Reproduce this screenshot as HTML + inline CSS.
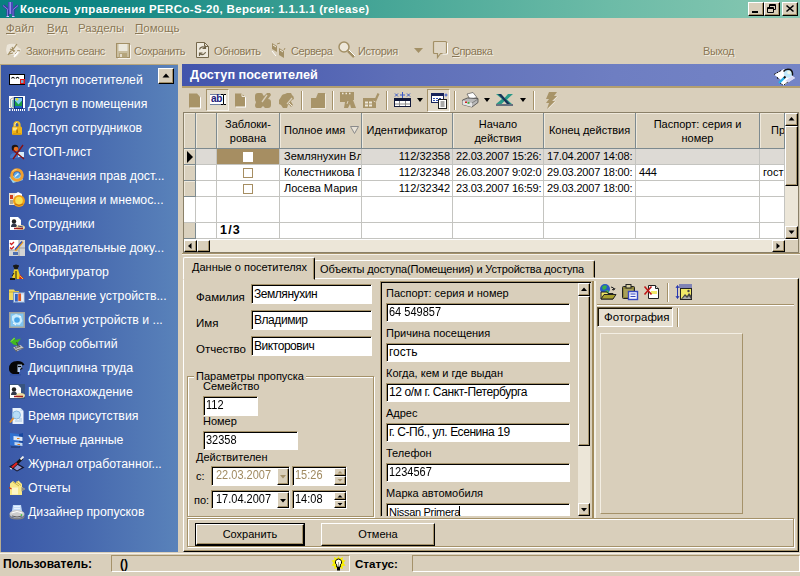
<!DOCTYPE html>
<html><head><meta charset="utf-8">
<style>
*{box-sizing:border-box;margin:0;padding:0}
html,body{width:800px;height:576px;overflow:hidden;background:#d9cfbb;font-family:"Liberation Sans",sans-serif;font-size:11px;color:#000}
.a{position:absolute}
.t{position:absolute;white-space:nowrap;line-height:14px}
#title{left:0;top:0;width:800px;height:18px;background:linear-gradient(90deg,#088080 0%,#0e8583 12%,#2e978d 30%,#4ca999 52%,#6cbba7 76%,#88c8b2 100%)}
#title .t{left:20px;top:1px;color:#fff;font-weight:bold;font-size:11.5px;letter-spacing:0.33px;line-height:16px}
.cb{position:absolute;top:2px;width:16px;height:14px;background:#d9cfbb;border:1px solid;border-color:#fff #000 #000 #fff;box-shadow:inset -1px -1px 0 #a5926a}
.menu{color:#8a7755;text-shadow:1px 1px 0 #f4efe4;font-size:11.5px;top:21px}
.tb{color:#8a7755;text-shadow:1px 1px 0 #f4efe4;font-size:11px;top:44px;letter-spacing:-0.4px}
#left{left:0;top:65px;width:178px;height:487px;border-left:1px solid #b8ac90;background:linear-gradient(90deg,#3a58a8 0%,#4668ae 45%,#5982ba 100%)}
#left .t{left:27px;color:#fff;font-size:12.3px;line-height:16px}
.ic{position:absolute;left:8px;width:16px;height:16px}
#hdr{left:182px;top:64px;width:618px;height:22px;background:linear-gradient(90deg,#4254ac 0%,#5e6fb8 35%,#6e7ec2 70%,#7484c6 100%)}
#hdr .t{left:8px;top:3px;color:#fff;font-weight:bold;font-size:12.7px;line-height:16px}
.inp{position:absolute;background:#fff;border:1px solid;border-color:#a5926a #fff #fff #a5926a;box-shadow:inset 1px 1px 0 #000}
.inp .t{left:3px;top:2px;font-size:12px}
.lbl{font-size:12px}
.hc{position:absolute;top:114px;height:34px;background:#d9cfbb;border:1px solid;border-color:#fff #a5926a #a5926a #fff;font-size:12px;line-height:14px;text-align:center}
.row{position:absolute;left:196px;width:589px;height:16px;background:#fff}
.cell{position:absolute;top:0;height:16px;font-size:12px;line-height:15px;white-space:nowrap;overflow:hidden;border-right:1px solid #c8c4bc;border-bottom:1px solid #c8c4bc}
.btn{position:absolute;background:#d9cfbb;border:1px solid;border-color:#fff #000 #000 #fff;box-shadow:inset -1px -1px 0 #a5926a;font-size:12px;text-align:center}
</style></head><body>
<!-- title -->
<div id="title" class="a"><svg class="a" style="left:2px;top:1px" width="18" height="17"><path d="M0 5l2.500-1.500L8 8.500v3z" fill="#3838a0"/><path d="M17 5l-2.500-1.500L10 8.500v3z" fill="#3838a0"/><path d="M1 4.500l6 5M16 4.500l-6 5" stroke="#8888e0" stroke-width="1"/><rect x="6" y="1" width="5" height="12" fill="#4848b8"/><rect x="7.500" y="1" width="1.500" height="12" fill="#9090e8"/><rect x="4.500" y="9" width="2.500" height="7" fill="#3838a0"/><rect x="10" y="9" width="2.500" height="7" fill="#3838a0"/><rect x="5" y="9" width="1" height="7" fill="#7878d8"/><rect x="10.500" y="9" width="1" height="7" fill="#7878d8"/><path d="M4.500 15.500h2.500M10 15.500h2.500" stroke="#d0d0ff"/></svg><div class="t">Консоль управления PERCo-S-20, Версия: 1.1.1.1 (release)</div>
<div class="cb" style="left:748px"><div class="a" style="left:3px;top:8px;width:6px;height:2px;background:#000"></div></div><div class="cb" style="left:764px"><svg width="14" height="12" style="position:absolute;left:0;top:0"><path d="M4.500 1.500h6v5h-6zM4.500 2.500h6" stroke="#000" fill="none"/><path d="M2.500 4.500h6v5h-6z" fill="#d9cfbb" stroke="#000"/><path d="M2.500 5.500h6" stroke="#000"/></svg></div><div class="cb" style="left:782px"><svg width="14" height="12" style="position:absolute;left:0;top:0"><path d="M3.500 2.500l7 6M10.500 2.500l-7 6" stroke="#000" stroke-width="1.600"/></svg></div>
</div>
<!-- menu -->
<div class="t menu" style="left:6px"><u>Ф</u>айл</div>
<div class="t menu" style="left:47px"><u>В</u>ид</div>
<div class="t menu" style="left:78px">Разделы</div>
<div class="t menu" style="left:135px"><u>П</u>омощь</div>
<!-- toolbar -->
<div class="t tb" style="left:26px">Закончить сеанс</div>
<div class="t tb" style="left:134px">Сохранить</div>
<div class="t tb" style="left:214px">Обновить</div>
<div class="t tb" style="left:291px">Сервера</div>
<div class="t tb" style="left:358px">История</div>
<div class="t tb" style="left:452px"><u>С</u>правка</div>
<div class="t tb" style="left:703px">Выход</div>
<!-- tbicons -->
<svg class="a" style="left:5px;top:42px" width="18" height="17"><path d="M2 3q3-2 8-1l4 4 2 1-1 3-3 4-2 1-1-2-7-1-1-4z" fill="#ece6da"/><path d="M12 2l-3 4-4 4-2 3M5 7l5 2M7 5l2 5M4 12l4-1" stroke="#a39066" stroke-width="1.200" fill="none"/><path d="M12 9q2-1 3 0M10 12l2-2" stroke="#a39066" stroke-width="1" fill="none"/><path d="M9 15l4-5" stroke="#fff" stroke-width="1.500"/></svg>
<svg class="a" style="left:115px;top:43px" width="17" height="16"><rect x="1.500" y=".5" width="13" height="14" fill="#c9bd9e" stroke="#a39066"/><rect x="3.500" y="1" width="9" height="7" fill="#ebe8dc"/><rect x="4" y="10" width="8" height="4.500" fill="#b5a57c"/><rect x="5" y="11" width="2" height="3" fill="#e4dccb"/><path d="M15.500 2v13.500H3" stroke="#f6f2ea" fill="none"/></svg>
<svg class="a" style="left:195px;top:41px" width="16" height="19"><path d="M1.500 1.500h8l4 4v11h-12z" fill="#eee9dd" stroke="#75684c" stroke-width="1"/><path d="M9.500 1.500v4h4" fill="none" stroke="#75684c"/><path d="M4.500 8.500a3.200 3.200 0 0 1 5.500-1.500M10.500 4.500v3h-3M10.500 11a3.200 3.200 0 0 1-5.500 1.500M4.500 15v-3h3" fill="none" stroke="#6e6248" stroke-width="1.200"/></svg>
<svg class="a" style="left:270px;top:41px" width="16" height="18"><path d="M2 2l5 3v6l-5-3z" fill="#a39066"/><path d="M9 7l5 3v7l-5-3z" fill="#a39066"/><path d="M3 4l3 2M10 9l3 2" stroke="#f1ece0"/><path d="M7 3l3-1M14 9l1-2" stroke="#a39066"/><path d="M2 10l4 5" stroke="#fff"/></svg>
<svg class="a" style="left:337px;top:40px" width="19" height="19"><circle cx="7" cy="7" r="5" fill="#eee8da" stroke="#a39066" stroke-width="1.500"/><path d="M11 11l6 6" stroke="#a39066" stroke-width="2.500"/><path d="M12 10l6 6" stroke="#fff" stroke-width="1"/></svg>
<svg class="a" style="left:414px;top:47px" width="10" height="7"><path d="M0 1h9L4.500 6z" fill="#a39066"/></svg>
<svg class="a" style="left:432px;top:40px" width="18" height="20"><path d="M2.500 1.500h11a1 1 0 0 1 1 1v10a1 1 0 0 1-1 1h-5l-3 4v-4h-3a1 1 0 0 1-1-1v-10a1 1 0 0 1 1-1z" fill="#dfd6c4" stroke="#a39066" stroke-width="1.200"/><path d="M15.500 3v11h-5" stroke="#fff" fill="none"/></svg>
<div class="a" style="left:0;top:64px;width:178px;height:1px;background:#b8a67c"></div>
<!-- left -->
<div id="left" class="a">
<svg class="ic" style="top:7px" viewBox="0 0 16 16"><rect x=".5" y="2.500" width="15" height="10" fill="#fff" stroke="#000"/><path d="M2.500 6.500q1.500-2.500 3 0M7 6.500q1.500-2.500 3 0" stroke="#000" fill="none" stroke-width="1.200"/><rect x="11" y="7" width="5" height="5" fill="#e01818"/><rect x="12" y="8" width="2.500" height="3" fill="#78a8c8"/></svg><div class="t" style="top:7px">Доступ посетителей</div>
<svg class="ic" style="top:31px" viewBox="0 0 16 16"><rect x="0" y="0" width="16" height="12" fill="#fff"/><rect x="5.500" y="1.500" width="8" height="11" fill="#18a040" stroke="#103080"/><path d="M6 2h7v2.500l-3.500 4-3.500-4z" fill="#80ccf0"/><circle cx="8" cy="3.300" r="1.300" fill="#f0e020"/><path d="M6 10h7v2H6z" fill="#2060c0"/><path d="M1.500 3l3-1.500v11l-3-1.500z" fill="#f0f0f0" stroke="#888" stroke-width=".6"/><path d="M4 4v7" stroke="#30a0a0"/><path d="M0 14h2M1 13l-1 1 1 1" stroke="#fff" fill="none"/><path d="M3 14h13" stroke="#fff" stroke-width="2" stroke-dasharray="1 1"/></svg><div class="t" style="top:31px">Доступ в помещения</div>
<svg class="ic" style="top:55px" viewBox="0 0 16 16"><path d="M5.500 7V4.500a2.500 2.500 0 0 1 5 0V7" fill="none" stroke="#e8b828" stroke-width="2.200"/><path d="M6 6V4.500a2 2 0 0 1 2-2" fill="none" stroke="#fcf0a0" stroke-width="1"/><rect x="3" y="6.500" width="10" height="8.500" rx="1.500" fill="#f0b418"/><rect x="4" y="7.500" width="4" height="3" fill="#fce480"/><rect x="7.300" y="9.500" width="1.600" height="3.500" fill="#a87408"/><path d="M4 14h8" stroke="#c08808"/></svg><div class="t" style="top:55px">Доступ сотрудников</div>
<svg class="ic" style="top:79px" viewBox="0 0 16 16"><circle cx="6" cy="4" r="3.300" fill="#1c1414"/><circle cx="7" cy="5" r="2.300" fill="#e87020"/><path d="M1 14q0-5 4.500-5t5 5z" fill="#4878c8"/><path d="M9 8h6v5H9z" fill="#d8ecf8"/><path d="M4 6l11 9M14 1L4 15" stroke="#8a1010" stroke-width="1.300"/></svg><div class="t" style="top:79px">СТОП-лист</div>
<svg class="ic" style="top:103px" viewBox="0 0 16 16"><path d="M0 9l4 6 10-3-3-6z" fill="#98d4f0"/><circle cx="8" cy="7" r="5.300" fill="none" stroke="#f0a030" stroke-width="3"/><circle cx="8" cy="7" r="3" fill="#58a8e8"/><path d="M6 8.500l3.500-3" stroke="#e8f4ff" stroke-width="1.500"/><path d="M3.500 3.500a6 6 0 0 1 4-2" stroke="#fcd890" fill="none"/></svg><div class="t" style="top:103px">Назначения прав дост...</div>
<svg class="ic" style="top:127px" viewBox="0 0 16 16"><rect x="0" y="1" width="9" height="12" fill="#ece4d4"/><rect x="1" y="3" width="3" height="4" fill="#d04020"/><rect x="1" y="8" width="3" height="4" fill="#b0a890"/><path d="M6 2l3-2 4 2v2H6z" fill="#fff"/><circle cx="10" cy="9" r="6" fill="#f0a018"/><circle cx="10" cy="8.500" r="3.800" fill="#f8e050"/><path d="M6 12q4 3 8 0" stroke="#c07010" fill="none"/></svg><div class="t" style="top:127px">Помещения и мнемос...</div>
<svg class="ic" style="top:151px" viewBox="0 0 16 16"><path d="M1 1h8l3 3v10H1z" fill="#fff"/><circle cx="5" cy="5.500" r="2.200" fill="#222"/><path d="M2 11q0-3.500 3-3.500t3 3.500z" fill="#303848"/><ellipse cx="11.500" cy="11.500" rx="4.500" ry="2.500" fill="#ecdca0"/><path d="M5 12.500h9" stroke="#a02020" stroke-width="1.500"/><path d="M9 10l5 1" stroke="#404080"/></svg><div class="t" style="top:151px">Сотрудники</div>
<svg class="ic" style="top:175px" viewBox="0 0 16 16"><rect x="0" y="0" width="16" height="16" fill="#d4d4d4"/><rect x="0" y="0" width="10" height="10" fill="#fff"/><path d="M1 3l1.500 1.500L5 2M1 7.500L2.500 9 5 6.500" stroke="#d02020" fill="none" stroke-width="1.300"/><path d="M10 0v16M10 8h6M0 10h10" stroke="#a0a0a0"/><path d="M5.500 10l7.500-9 1.500 1.500-7.500 9z" fill="#f0a020"/><path d="M6 9.500l7-8" stroke="#3050c0" stroke-width="1.200"/><rect x="4" y="12" width="5" height="3" fill="#5070b0"/></svg><div class="t" style="top:175px">Оправдательные доку...</div>
<svg class="ic" style="top:199px" viewBox="0 0 16 16"><circle cx="7" cy="3" r="2.400" fill="#181818"/><path d="M4 2h6" stroke="#181818" stroke-width="1.500"/><path d="M3 15l2-9.500h4l3 9.500z" fill="#f0d020"/><path d="M7 7v8M5 9l-2 3" stroke="#181818"/><path d="M11 10.500l4 4.500h-5z" fill="#e02020"/><path d="M11 12l3 3" stroke="#f0d020"/><rect x="1" y="14" width="5" height="2" fill="#181818"/></svg><div class="t" style="top:199px">Конфигуратор</div>
<svg class="ic" style="top:223px" viewBox="0 0 16 16"><path d="M0 1.500h5l1 1.500h4V12H0z" fill="#f0d860"/><path d="M0 4h10" stroke="#c8a830"/><rect x="4.500" y="4.500" width="11" height="10" fill="#c8d8f0" stroke="#7090c0" stroke-width=".8"/><rect x="6" y="6" width="2.800" height="7.500" fill="#3060c0"/><rect x="9.300" y="5.500" width="2.700" height="7.500" fill="#e05820"/><rect x="12.500" y="6.500" width="2" height="6.500" fill="#f0f0f0"/></svg><div class="t" style="top:223px">Управление устройств...</div>
<svg class="ic" style="top:247px" viewBox="0 0 16 16"><rect x="0" y="0" width="16" height="16" fill="#a4a49c"/><rect x="1.500" y="1.500" width="13" height="13" fill="#80c4f0"/><path d="M3 4l4-2 5 2 1.500 5-3 4-5-1-2.500-4z" fill="#c8ecff"/><circle cx="8" cy="8" r="2.800" fill="#48a4e8"/><path d="M4 11l3 2M10 4l2 1" stroke="#fff"/></svg><div class="t" style="top:247px">События устройств и ...</div>
<svg class="ic" style="top:271px" viewBox="0 0 16 16"><path d="M1 5.500l4.500-4.500 1 3 5.500-1.500-3.500 4.500 1 3-5-1.500z" fill="#40b820"/><path d="M2 5.500l3.500-3.500" stroke="#a0e860"/><path d="M4 11.500l7.500-2.500 3.500 3-7.500 3.500z" fill="#c4c4c4"/><path d="M4 11.500l3.500 4v-1.500l7.500-2" stroke="#585858" fill="none" stroke-width=".8"/><path d="M6.500 12l5.500-2" stroke="#303030" stroke-dasharray="1 1" stroke-width="1.500"/><path d="M7.500 6l2 4.500" stroke="#404040"/></svg><div class="t" style="top:271px">Выбор событий</div>
<svg class="ic" style="top:295px" viewBox="0 0 16 16"><path d="M0 9q0-8 8.500-8 5.500 0 7 4l-3 .5 1 3.500-3.500 1v4H4q-4-1.500-4-5z" fill="#060606"/><path d="M8.500 4.500h4.500l-.5 3.500-1.500 1v3h-2.500z" fill="#b0c8e8"/><path d="M9 6.500h3" stroke="#060606" stroke-width="1.300"/><rect x="1" y="14" width="11" height="1.500" fill="#3050a0"/></svg><div class="t" style="top:295px">Дисциплина труда</div>
<svg class="ic" style="top:319px" viewBox="0 0 16 16"><rect x="0" y="0" width="16" height="15" fill="#385480"/><path d="M1 1h8l3 3v10H1z" fill="#fff"/><circle cx="5" cy="5.500" r="2.200" fill="#222"/><path d="M2 11q0-3.500 3-3.500t3 3.500z" fill="#303848"/><ellipse cx="11.500" cy="11.500" rx="4.500" ry="2.500" fill="#ecdca0"/><path d="M5 12.500h9" stroke="#a02020" stroke-width="1.500"/></svg><div class="t" style="top:319px">Местонахождение</div>
<svg class="ic" style="top:343px" viewBox="0 0 16 16"><path d="M3.500 0h8l3 3v13h-11z" fill="#eaf2fb"/><path d="M11.500 0v3h3" fill="#c8dcf0"/><circle cx="7.500" cy="7" r="4" fill="#b8dcf6" stroke="#88b8e0"/><path d="M4.500 10l-3.500 4.500" stroke="#e09030" stroke-width="2"/><path d="M10 11h3M6 13h7" stroke="#a8c4e0"/></svg><div class="t" style="top:343px">Время присутствия</div>
<svg class="ic" style="top:367px" viewBox="0 0 16 16"><path d="M1 1l9 1v13l-9-2z" fill="#3070d0"/><path d="M10 2l4-1v12l-4 2z" fill="#1848a0"/><path d="M4.500 4l9 1v4l-9-1z" fill="#dce8f8"/><path d="M5.500 10l8 1v3l-8-1z" fill="#c4d8f0"/><path d="M8 6.500h2.500M8.500 12.500H11" stroke="#e08020" stroke-width="1.200"/><path d="M2 15h9" stroke="#183060"/></svg><div class="t" style="top:367px">Учетные данные</div>
<svg class="ic" style="top:391px" viewBox="0 0 16 16"><path d="M0 10.500l7-4 8.500 5-7.500 4z" fill="#141428"/><path d="M2.500 10.500l4.500-2.500 6 3.500-5 3z" fill="#8c94cc"/><path d="M2 11l10-9.500 2 2-10 9.500z" fill="#141414"/><path d="M3 11.500l5-4.500" stroke="#e02020" stroke-width="2.200"/><path d="M11.500 3.500l3-3" stroke="#f0f0f0" stroke-width="1.800"/><path d="M1 12.500l2 .5" stroke="#f0f0f0"/></svg><div class="t" style="top:391px">Журнал отработанног...</div>
<svg class="ic" style="top:415px" viewBox="0 0 16 16"><path d="M1 3.500l3-2.500 2.500 2 3-2.500 3.500 3.500v3l3 2-3 2v4H1z" fill="#f8e888"/><path d="M3 7.500h6v7H3z" fill="#fdf6c8"/><path d="M0 7.500l2.500 1.500" stroke="#d03010" stroke-width="1.300"/><path d="M12.500 7l3.500 2-3.500 2.500z" fill="#888"/><path d="M4 2l6 4M7 1.500l5 4" stroke="#c8b048"/></svg><div class="t" style="top:415px">Отчеты</div>
<svg class="ic" style="top:439px" viewBox="0 0 16 16"><path d="M4 1h8l1 6H3z" fill="#c4dcf8"/><path d="M5 2.500h6M5 4.500h6" stroke="#e8f2ff"/><ellipse cx="8" cy="10" rx="7.500" ry="4" fill="#cccccc"/><path d="M.5 10q0 4 7.500 4t7.500-4v2.500q0 3-7.500 3t-7.500-3z" fill="#848484"/><path d="M2.500 9q5.500-3 11 0" stroke="#fff" fill="none"/><path d="M3 12q5 2 10 0" stroke="#606060" fill="none"/><circle cx="12.500" cy="11" r=".8" fill="#20d020"/></svg><div class="t" style="top:439px">Дизайнер пропусков</div>
<div class="btn" style="left:157px;top:3px;width:16px;height:16px"><svg width="14" height="14" style="position:absolute;left:0;top:0"><path d="M3.500 8.500l3.500-4 3.500 4z" fill="#000"/></svg></div>
</div>
<!-- header -->
<div id="hdr" class="a"><div class="t">Доступ посетителей</div></div>
<!-- gridtb -->
<div class="a" style="left:182px;top:86px;width:618px;height:2px;background:#b39f70"></div>
<svg class="a" style="left:773px;top:67px" width="24" height="20" viewBox="0 0 24 20"><path d="M1 7.500L11 2l4 3 7 6-5 3-6 4.500-4-2.500 1-3z" fill="#fff"/><path d="M1 7.500L9 3M5 12l-1-2.500M8 13l-1 3 3 2M11 18l5-4" stroke="#111" stroke-width="1" fill="none" stroke-dasharray="2 1"/><path d="M12 14l4 1 6-4-3-2z" fill="#d8d8f4"/><circle cx="15" cy="6.500" r="4.200" fill="#bfe6fa"/><circle cx="16" cy="5.500" r="1.800" fill="#eef6e8"/><path d="M10.500 4.500q2-3 6.500-2 3 1.500 2.500 6" stroke="#111" stroke-width="1.400" fill="none"/><path d="M11.500 10.500L6 16" stroke="#28b0e8" stroke-width="2.400"/><path d="M12.500 9.500l-1.500 1.500" stroke="#111" stroke-width="2"/></svg>
<svg class="a" style="left:188px;top:92px" width="16" height="18"><path d="M2 2.500h8l3 3v11H2z" fill="#fff"/><path d="M1 1.500h8l3 3v11H1z" fill="#a89468"/></svg>
<div class="a" style="left:206px;top:89px;width:23px;height:22px;border:1px solid;border-color:#a5926a #f6f2ea #f6f2ea #a5926a;background:#e3dccc"></div>
<div class="a" style="left:210px;top:94px;width:16px;height:11px;background:#fff;border-top:1px solid #7080a0;border-bottom:1px solid #7080a0"></div><div class="t" style="left:211px;top:92px;font-size:10px;font-weight:bold;color:#20207a;letter-spacing:-0.2px">ab</div><svg class="a" style="left:221px;top:94px" width="5" height="11"><path d="M0 .5h2l.5 1 .5-1h2M0 10.500h2l.5-1 .5 1h2M2.500 1v9" stroke="#000" fill="none" stroke-width="1"/></svg>
<svg class="a" style="left:234px;top:92px" width="16" height="18"><path d="M2 2.500h7l3 3v10H2z" fill="#fff"/><path d="M1 1.500h7l3 3v10H1z" fill="#a89468"/><path d="M8 1.500v3h3" stroke="#efe9dc" fill="none"/></svg>
<svg class="a" style="left:254px;top:92px" width="18" height="17"><path d="M1 4q0-3 3-3h3q2 0 2 2l1 1 3-3h3l1 2-3 4q3 0 3 3v3q0 3-3 3h-3l-2-2-2 2H3q-2 0-2-3l1-3q-1-1-1-3z" fill="#a89468"/><path d="M13 3l-5 7" stroke="#d9cfbb" stroke-width="1.300"/></svg>
<svg class="a" style="left:278px;top:92px" width="18" height="17"><path d="M3 5q1-3 4-3l2-1h4l1 2q2 1 2 4l-2 1-2 3-2 2-1 3H5l-2-3-2-1 0-4z" fill="#a89468"/><path d="M12 8l3 5-2 2-3-4" fill="#a89468"/><path d="M14 6l-5 6" stroke="#d9cfbb" stroke-width="1.200"/><path d="M11 11l3 3" stroke="#efe9dc" stroke-width="1"/></svg>
<div class="a" style="left:301px;top:91px;width:2px;height:19px;border-left:1px solid #a5926a;border-right:1px solid #fff"></div>
<svg class="a" style="left:311px;top:92px" width="16" height="17"><path d="M0 6h5l2-5h7v15H0z" fill="#a89468"/><path d="M14.500 2v14.500H1" stroke="#efe9dc" fill="none"/></svg>
<div class="a" style="left:332px;top:91px;width:2px;height:19px;border-left:1px solid #a5926a;border-right:1px solid #fff"></div>
<svg class="a" style="left:340px;top:92px" width="18" height="17"><path d="M0 0h14v8h-1l3 8h-5l-1-4-2 4H4l1-6H0z" fill="#a89468"/><path d="M2 1.500h1.500M5.500 1.500H7M9 1.500h1.500" stroke="#efe9dc" stroke-width="1.400"/><path d="M7 12l1-3" stroke="#d9cfbb"/></svg>
<svg class="a" style="left:362px;top:92px" width="18" height="17"><path d="M1 6h13v10H1z" fill="#a89468"/><path d="M3 9.500h3v2H3zM7 9.500h3v2H7zM3 12.500h3v2H3zM7 12.500h3v2H7z" fill="#eee8da"/><path d="M11 11l4.500-10 2 1-4.500 10-2 1z" fill="#a89468"/><path d="M11.500 9l2 1" stroke="#d9cfbb"/></svg>
<div class="a" style="left:386px;top:91px;width:2px;height:19px;border-left:1px solid #a5926a;border-right:1px solid #fff"></div>
<svg class="a" style="left:393px;top:92px" width="19" height="16"><path d="M2 1.500l3 3M5 1.500l-3 3M9.500 0v6M7 3h5M14 1.500l3 3M17 1.500l-3 3" stroke="#3858c8" stroke-width="1"/><rect x="1.500" y="6.500" width="16" height="8" fill="#fff" stroke="#10183a"/><rect x="1" y="6" width="17" height="3" fill="#10183a"/><path d="M2 12h15M6.500 9v5M12.500 9v5" stroke="#8a8a8a" stroke-width="1"/></svg>
<svg class="a" style="left:416px;top:97px" width="8" height="6"><path d="M1 1h6L4 5z" fill="#000"/></svg>
<div class="a" style="left:427px;top:89px;width:23px;height:23px;border:1px solid;border-color:#a5926a #fff #fff #a5926a;background:#e4dccb"></div>
<svg class="a" style="left:430px;top:92px" width="19" height="18"><rect x="1.500" y="1.500" width="12" height="9" fill="#fff" stroke="#18245a"/><rect x="1" y="1" width="13" height="3" fill="#18245a"/><path d="M3 6h2v1H3zM6 6h2v1H6zM9 6h2v1H9zM3 8h2v1H3zM6 8h2v1H6z" fill="#3050b0"/><rect x="8.500" y="7.500" width="8" height="9" fill="#fff" stroke="#222"/><path d="M10.500 10h4M10.500 12h4M10.500 14h4" stroke="#555"/><path d="M16 1.500v3M14.500 3h3" stroke="#3858c8"/></svg>
<div class="a" style="left:454px;top:91px;width:2px;height:19px;border-left:1px solid #a5926a;border-right:1px solid #fff"></div>
<svg class="a" style="left:461px;top:92px" width="19" height="17"><path d="M6 2l6-1.500 4 5-7 2z" fill="#fff" stroke="#555" stroke-width=".7"/><path d="M1.500 8l5-2 10.500.5v4l-6 4.500-9.500-2.500z" fill="#b8b8b8" stroke="#333" stroke-width=".7"/><path d="M1.500 8.500l9.500 2.500v4l-9.500-2.500z" fill="#e4e4e4"/><path d="M11 11l6-4" stroke="#666" stroke-width=".7"/><rect x="4" y="9.500" width="2" height="1.500" fill="#d02020"/><rect x="6.500" y="10.200" width="2" height="1.500" fill="#20a020"/></svg>
<svg class="a" style="left:483px;top:97px" width="8" height="6"><path d="M1 1h6L4 5z" fill="#000"/></svg>
<svg class="a" style="left:496px;top:93px" width="18" height="13"><path d="M0 1h5l3.500 4 3.500-4h5l-6 5.500 5 4.500h-5l-2.500-3-3 3H0l6-5z" fill="#2a9a88"/><path d="M2 1h3l9 10h-3z" fill="#183058"/><path d="M0 12h17" stroke="#183058" stroke-width="1.200"/></svg>
<svg class="a" style="left:519px;top:97px" width="8" height="6"><path d="M1 1h6L4 5z" fill="#000"/></svg>
<div class="a" style="left:533px;top:91px;width:2px;height:19px;border-left:1px solid #a5926a;border-right:1px solid #fff"></div>
<svg class="a" style="left:543px;top:92px" width="16" height="17"><path d="M6 0h8l-3 4h3l-5 5h3l-8 8 2-6H3l3-4H3z" fill="#a89468"/><path d="M14.500 4.500l-4 4M12.500 9.500l-7 7" stroke="#efe9dc" stroke-width=".8"/></svg>
<!-- grid -->
<div class="a" style="left:183px;top:112px;width:616px;height:141px;background:#fff;border:1px solid #8a8068"></div>
<div class="a" style="left:184px;top:113px;width:12px;height:36px;background:#dad1be;border-right:1px solid #7d8a8f;border-bottom:1px solid #7d8a8f;box-shadow:inset 1px 1px 0 #efe9dc;font-size:11px;line-height:15px;text-align:center;padding-top:10px;white-space:nowrap;overflow:hidden"></div>
<div class="a" style="left:196px;top:113px;width:21px;height:36px;background:#dad1be;border-right:1px solid #7d8a8f;border-bottom:1px solid #7d8a8f;box-shadow:inset 1px 1px 0 #efe9dc;font-size:11px;line-height:15px;text-align:center;padding-top:10px;white-space:nowrap;overflow:hidden"></div>
<div class="a" style="left:217px;top:113px;width:63px;height:36px;background:#dad1be;border-right:1px solid #7d8a8f;border-bottom:1px solid #7d8a8f;box-shadow:inset 1px 1px 0 #efe9dc;font-size:11px;line-height:14px;text-align:center;padding-top:4px;white-space:nowrap;overflow:hidden">Заблоки-<br>рована</div>
<div class="a" style="left:280px;top:113px;width:82px;height:36px;background:#dad1be;border-right:1px solid #7d8a8f;border-bottom:1px solid #7d8a8f;box-shadow:inset 1px 1px 0 #efe9dc;font-size:11px;line-height:15px;text-align:left;padding-top:10px;padding-left:4px;white-space:nowrap;overflow:hidden">Полное имя <svg width="9" height="8" style="margin-left:2px"><path d="M.5 .5h8L4.5 7.5z" fill="#e8e2d6" stroke="#8a8a8a"/></svg></div>
<div class="a" style="left:362px;top:113px;width:91px;height:36px;background:#dad1be;border-right:1px solid #7d8a8f;border-bottom:1px solid #7d8a8f;box-shadow:inset 1px 1px 0 #efe9dc;font-size:11px;line-height:15px;text-align:center;padding-top:10px;white-space:nowrap;overflow:hidden">Идентификатор</div>
<div class="a" style="left:453px;top:113px;width:91px;height:36px;background:#dad1be;border-right:1px solid #7d8a8f;border-bottom:1px solid #7d8a8f;box-shadow:inset 1px 1px 0 #efe9dc;font-size:11px;line-height:14px;text-align:center;padding-top:4px;white-space:nowrap;overflow:hidden">Начало<br>действия</div>
<div class="a" style="left:544px;top:113px;width:92px;height:36px;background:#dad1be;border-right:1px solid #7d8a8f;border-bottom:1px solid #7d8a8f;box-shadow:inset 1px 1px 0 #efe9dc;font-size:11px;line-height:15px;text-align:center;padding-top:10px;white-space:nowrap;overflow:hidden">Конец действия</div>
<div class="a" style="left:636px;top:113px;width:124px;height:36px;background:#dad1be;border-right:1px solid #7d8a8f;border-bottom:1px solid #7d8a8f;box-shadow:inset 1px 1px 0 #efe9dc;font-size:11px;line-height:14px;text-align:center;padding-top:4px;white-space:nowrap;overflow:hidden">Паспорт: серия и<br>номер</div>
<div class="a" style="left:760px;top:113px;width:25px;height:36px;background:#dad1be;border-right:1px solid #7d8a8f;border-bottom:1px solid #7d8a8f;box-shadow:inset 1px 1px 0 #efe9dc;font-size:11px;line-height:15px;text-align:left;padding-top:10px;padding-left:11px;white-space:nowrap;overflow:hidden">Пр</div>
<div class="a" style="left:184px;top:149px;width:12px;height:16px;background:#dad1be;border-right:1px solid #7d8a8f;border-bottom:1px solid #7d8a8f;box-shadow:inset 1px 1px 0 #efe9dc"></div>
<div class="a" style="left:196px;top:149px;width:21px;height:16px;background:#dddad5;border-right:1px solid #c4c4c0;border-bottom:1px solid #c4c4c0;font-size:11px;line-height:15px;text-align:left;padding:0 3px;white-space:nowrap;overflow:hidden"></div>
<div class="a" style="left:217px;top:149px;width:63px;height:16px;background:#a68e62;border-right:1px solid #c4c4c0;border-bottom:1px solid #c4c4c0;font-size:11px;line-height:15px;text-align:left;padding:0 3px;white-space:nowrap;overflow:hidden"><div style="position:absolute;left:26px;top:3px;width:10px;height:10px;background:#fff;border:1px solid #fff"></div></div>
<div class="a" style="left:280px;top:149px;width:82px;height:16px;background:#dddad5;border-right:1px solid #c4c4c0;border-bottom:1px solid #c4c4c0;font-size:11px;line-height:15px;text-align:left;padding:0 4px;white-space:nowrap;overflow:hidden">Землянухин Вл</div>
<div class="a" style="left:362px;top:149px;width:91px;height:16px;background:#dddad5;border-right:1px solid #c4c4c0;border-bottom:1px solid #c4c4c0;font-size:11px;line-height:15px;text-align:right;padding:0 2px;white-space:nowrap;overflow:hidden">112/32358</div>
<div class="a" style="left:453px;top:149px;width:91px;height:16px;background:#dddad5;border-right:1px solid #c4c4c0;border-bottom:1px solid #c4c4c0;font-size:11px;line-height:15px;text-align:left;padding:0 0 0 3px;letter-spacing:-0.2px;white-space:nowrap;overflow:hidden">22.03.2007 15:26:</div>
<div class="a" style="left:544px;top:149px;width:92px;height:16px;background:#dddad5;border-right:1px solid #c4c4c0;border-bottom:1px solid #c4c4c0;font-size:11px;line-height:15px;text-align:left;padding:0 0 0 3px;letter-spacing:-0.2px;white-space:nowrap;overflow:hidden">17.04.2007 14:08:</div>
<div class="a" style="left:636px;top:149px;width:124px;height:16px;background:#dddad5;border-right:1px solid #c4c4c0;border-bottom:1px solid #c4c4c0;font-size:11px;line-height:15px;text-align:left;padding:0 3px;white-space:nowrap;overflow:hidden"></div>
<div class="a" style="left:760px;top:149px;width:25px;height:16px;background:#dddad5;border-right:1px solid #c4c4c0;border-bottom:1px solid #c4c4c0;font-size:11px;line-height:15px;text-align:left;padding:0 3px;white-space:nowrap;overflow:hidden"></div>
<div class="a" style="left:184px;top:165px;width:12px;height:16px;background:#dad1be;border-right:1px solid #7d8a8f;border-bottom:1px solid #7d8a8f;box-shadow:inset 1px 1px 0 #efe9dc"></div>
<div class="a" style="left:196px;top:165px;width:21px;height:16px;background:#fff;border-right:1px solid #c4c4c0;border-bottom:1px solid #c4c4c0;font-size:11px;line-height:15px;text-align:left;padding:0 3px;white-space:nowrap;overflow:hidden"></div>
<div class="a" style="left:217px;top:165px;width:63px;height:16px;background:#fff;border-right:1px solid #c4c4c0;border-bottom:1px solid #c4c4c0;font-size:11px;line-height:15px;text-align:left;padding:0 3px;white-space:nowrap;overflow:hidden"><div style="position:absolute;left:26px;top:3px;width:10px;height:10px;background:#fff;border:1px solid #a68e62"></div></div>
<div class="a" style="left:280px;top:165px;width:82px;height:16px;background:#fff;border-right:1px solid #c4c4c0;border-bottom:1px solid #c4c4c0;font-size:11px;line-height:15px;text-align:left;padding:0 4px;white-space:nowrap;overflow:hidden">Колестникова Г</div>
<div class="a" style="left:362px;top:165px;width:91px;height:16px;background:#fff;border-right:1px solid #c4c4c0;border-bottom:1px solid #c4c4c0;font-size:11px;line-height:15px;text-align:right;padding:0 2px;white-space:nowrap;overflow:hidden">112/32348</div>
<div class="a" style="left:453px;top:165px;width:91px;height:16px;background:#fff;border-right:1px solid #c4c4c0;border-bottom:1px solid #c4c4c0;font-size:11px;line-height:15px;text-align:left;padding:0 0 0 3px;letter-spacing:-0.2px;white-space:nowrap;overflow:hidden">26.03.2007 9:02:0</div>
<div class="a" style="left:544px;top:165px;width:92px;height:16px;background:#fff;border-right:1px solid #c4c4c0;border-bottom:1px solid #c4c4c0;font-size:11px;line-height:15px;text-align:left;padding:0 0 0 3px;letter-spacing:-0.2px;white-space:nowrap;overflow:hidden">29.03.2007 18:00:</div>
<div class="a" style="left:636px;top:165px;width:124px;height:16px;background:#fff;border-right:1px solid #c4c4c0;border-bottom:1px solid #c4c4c0;font-size:11px;line-height:15px;text-align:left;padding:0 3px;letter-spacing:-0.2px;white-space:nowrap;overflow:hidden">444</div>
<div class="a" style="left:760px;top:165px;width:25px;height:16px;background:#fff;border-right:1px solid #c4c4c0;border-bottom:1px solid #c4c4c0;font-size:11px;line-height:15px;text-align:left;padding:0 3px;white-space:nowrap;overflow:hidden">гост</div>
<div class="a" style="left:184px;top:181px;width:12px;height:16px;background:#dad1be;border-right:1px solid #7d8a8f;border-bottom:1px solid #7d8a8f;box-shadow:inset 1px 1px 0 #efe9dc"></div>
<div class="a" style="left:196px;top:181px;width:21px;height:16px;background:#fff;border-right:1px solid #c4c4c0;border-bottom:1px solid #c4c4c0;font-size:11px;line-height:15px;text-align:left;padding:0 3px;white-space:nowrap;overflow:hidden"></div>
<div class="a" style="left:217px;top:181px;width:63px;height:16px;background:#fff;border-right:1px solid #c4c4c0;border-bottom:1px solid #c4c4c0;font-size:11px;line-height:15px;text-align:left;padding:0 3px;white-space:nowrap;overflow:hidden"><div style="position:absolute;left:26px;top:3px;width:10px;height:10px;background:#fff;border:1px solid #a68e62"></div></div>
<div class="a" style="left:280px;top:181px;width:82px;height:16px;background:#fff;border-right:1px solid #c4c4c0;border-bottom:1px solid #c4c4c0;font-size:11px;line-height:15px;text-align:left;padding:0 4px;white-space:nowrap;overflow:hidden">Лосева Мария І</div>
<div class="a" style="left:362px;top:181px;width:91px;height:16px;background:#fff;border-right:1px solid #c4c4c0;border-bottom:1px solid #c4c4c0;font-size:11px;line-height:15px;text-align:right;padding:0 2px;white-space:nowrap;overflow:hidden">112/32342</div>
<div class="a" style="left:453px;top:181px;width:91px;height:16px;background:#fff;border-right:1px solid #c4c4c0;border-bottom:1px solid #c4c4c0;font-size:11px;line-height:15px;text-align:left;padding:0 0 0 3px;letter-spacing:-0.2px;white-space:nowrap;overflow:hidden">23.03.2007 16:59:</div>
<div class="a" style="left:544px;top:181px;width:92px;height:16px;background:#fff;border-right:1px solid #c4c4c0;border-bottom:1px solid #c4c4c0;font-size:11px;line-height:15px;text-align:left;padding:0 0 0 3px;letter-spacing:-0.2px;white-space:nowrap;overflow:hidden">29.03.2007 18:00:</div>
<div class="a" style="left:636px;top:181px;width:124px;height:16px;background:#fff;border-right:1px solid #c4c4c0;border-bottom:1px solid #c4c4c0;font-size:11px;line-height:15px;text-align:left;padding:0 3px;white-space:nowrap;overflow:hidden"></div>
<div class="a" style="left:760px;top:181px;width:25px;height:16px;background:#fff;border-right:1px solid #c4c4c0;border-bottom:1px solid #c4c4c0;font-size:11px;line-height:15px;text-align:left;padding:0 3px;white-space:nowrap;overflow:hidden"></div>
<svg class="a" style="left:186px;top:151px" width="8" height="12"><path d="M1 0l6 6-6 6z" fill="#000"/></svg>
<div class="a" style="left:184px;top:197px;width:12px;height:26px;background:#fff;border-right:1px solid #c4c4c0;border-bottom:1px solid #c4c4c0"></div>
<div class="a" style="left:196px;top:197px;width:21px;height:26px;background:#fff;border-right:1px solid #c4c4c0;border-bottom:1px solid #c4c4c0;font-size:11px;line-height:25px;text-align:left;padding:0 3px;white-space:nowrap;overflow:hidden"></div>
<div class="a" style="left:217px;top:197px;width:63px;height:26px;background:#fff;border-right:1px solid #c4c4c0;border-bottom:1px solid #c4c4c0;font-size:11px;line-height:25px;text-align:left;padding:0 3px;white-space:nowrap;overflow:hidden"></div>
<div class="a" style="left:280px;top:197px;width:82px;height:26px;background:#fff;border-right:1px solid #c4c4c0;border-bottom:1px solid #c4c4c0;font-size:11px;line-height:25px;text-align:left;padding:0 3px;white-space:nowrap;overflow:hidden"></div>
<div class="a" style="left:362px;top:197px;width:91px;height:26px;background:#fff;border-right:1px solid #c4c4c0;border-bottom:1px solid #c4c4c0;font-size:11px;line-height:25px;text-align:left;padding:0 3px;white-space:nowrap;overflow:hidden"></div>
<div class="a" style="left:453px;top:197px;width:91px;height:26px;background:#fff;border-right:1px solid #c4c4c0;border-bottom:1px solid #c4c4c0;font-size:11px;line-height:25px;text-align:left;padding:0 3px;white-space:nowrap;overflow:hidden"></div>
<div class="a" style="left:544px;top:197px;width:92px;height:26px;background:#fff;border-right:1px solid #c4c4c0;border-bottom:1px solid #c4c4c0;font-size:11px;line-height:25px;text-align:left;padding:0 3px;white-space:nowrap;overflow:hidden"></div>
<div class="a" style="left:636px;top:197px;width:124px;height:26px;background:#fff;border-right:1px solid #c4c4c0;border-bottom:1px solid #c4c4c0;font-size:11px;line-height:25px;text-align:left;padding:0 3px;white-space:nowrap;overflow:hidden"></div>
<div class="a" style="left:760px;top:197px;width:25px;height:26px;background:#fff;border-right:1px solid #c4c4c0;border-bottom:1px solid #c4c4c0;font-size:11px;line-height:25px;text-align:left;padding:0 3px;white-space:nowrap;overflow:hidden"></div>
<div class="a" style="left:184px;top:223px;width:12px;height:16px;background:#dad1be;border-right:1px solid #7d8a8f;border-bottom:1px solid #7d8a8f"></div>
<div class="a" style="left:196px;top:223px;width:21px;height:16px;background:#fff;border-right:1px solid #c4c4c0;border-bottom:1px solid #c4c4c0;font-size:11px;line-height:15px;text-align:left;padding:0 3px;white-space:nowrap;overflow:hidden"></div>
<div class="a" style="left:217px;top:223px;width:63px;height:16px;background:#fff;border-right:1px solid #c4c4c0;border-bottom:1px solid #c4c4c0;font-size:11px;line-height:15px;text-align:left;padding:0 3px;white-space:nowrap;overflow:hidden"><b style="font-size:12.5px;letter-spacing:1.2px">1/3</b></div>
<div class="a" style="left:280px;top:223px;width:82px;height:16px;background:#fff;border-right:1px solid #c4c4c0;border-bottom:1px solid #c4c4c0;font-size:11px;line-height:15px;text-align:left;padding:0 3px;white-space:nowrap;overflow:hidden"></div>
<div class="a" style="left:362px;top:223px;width:91px;height:16px;background:#fff;border-right:1px solid #c4c4c0;border-bottom:1px solid #c4c4c0;font-size:11px;line-height:15px;text-align:left;padding:0 3px;white-space:nowrap;overflow:hidden"></div>
<div class="a" style="left:453px;top:223px;width:91px;height:16px;background:#fff;border-right:1px solid #c4c4c0;border-bottom:1px solid #c4c4c0;font-size:11px;line-height:15px;text-align:left;padding:0 3px;white-space:nowrap;overflow:hidden"></div>
<div class="a" style="left:544px;top:223px;width:92px;height:16px;background:#fff;border-right:1px solid #c4c4c0;border-bottom:1px solid #c4c4c0;font-size:11px;line-height:15px;text-align:left;padding:0 3px;white-space:nowrap;overflow:hidden"></div>
<div class="a" style="left:636px;top:223px;width:124px;height:16px;background:#fff;border-right:1px solid #c4c4c0;border-bottom:1px solid #c4c4c0;font-size:11px;line-height:15px;text-align:left;padding:0 3px;white-space:nowrap;overflow:hidden"></div>
<div class="a" style="left:760px;top:223px;width:25px;height:16px;background:#fff;border-right:1px solid #c4c4c0;border-bottom:1px solid #c4c4c0;font-size:11px;line-height:15px;text-align:left;padding:0 3px;white-space:nowrap;overflow:hidden"></div>
<div class="a" style="left:785px;top:113px;width:13px;height:126px;background:#ece6d8"></div>
<div class="btn" style="left:785px;top:113px;width:13px;height:13px"><svg width="11" height="11" style="position:absolute;left:0;top:0"><path d="M2.5 6.5h6l-3-3.5z" fill="#000"/></svg></div>
<div class="btn" style="left:785px;top:126px;width:13px;height:60px"></div>
<div class="btn" style="left:785px;top:226px;width:13px;height:13px"><svg width="11" height="11" style="position:absolute;left:0;top:0"><path d="M2.5 3.5h6l-3 3.5z" fill="#000"/></svg></div>
<div class="a" style="left:184px;top:240px;width:614px;height:12px;background:#ece6d8"></div>
<div class="btn" style="left:184px;top:240px;width:13px;height:12px"><svg width="11" height="10" style="position:absolute;left:0;top:0"><path d="M6.5 2.0v6l-3.5-3z" fill="#000"/></svg></div>
<div class="btn" style="left:197px;top:240px;width:13px;height:12px"></div>
<div class="btn" style="left:772px;top:240px;width:13px;height:12px"><svg width="11" height="10" style="position:absolute;left:0;top:0"><path d="M3.5 2.0v6l3.5-3z" fill="#000"/></svg></div>
<div class="a" style="left:785px;top:240px;width:13px;height:12px;background:#d9cfbb"></div>
<!-- tabs -->
<div class="a" style="left:182px;top:253px;width:618px;height:2px;border-top:1px solid #a5926a;border-bottom:1px solid #f6f2ea"></div>
<div class="a" style="left:183px;top:278px;width:616px;height:274px;border:1px solid;border-color:#fff #000 #000 #fff;box-shadow:inset -1px -1px 0 #a5926a"></div>
<div class="a" style="left:314px;top:260px;width:281px;height:18px;border:1px solid;border-color:#fff #000 transparent #fff;border-radius:2px 2px 0 0;box-shadow:inset -1px 0 0 #a5926a"></div>
<div class="t" style="left:320px;top:262px;font-size:11px;letter-spacing:-0.15px">Объекты доступа(Помещения) и Устройства доступа</div>
<div class="a" style="left:183px;top:257px;width:132px;height:23px;background:#d9cfbb;border:1px solid;border-color:#fff #000 #d9cfbb #fff;border-radius:2px 2px 0 0;box-shadow:inset -1px 0 0 #a5926a"></div>
<div class="t" style="left:192px;top:260px;font-size:11px">Данные о посетителях</div>
<div class="t" style="left:196px;top:290px;font-size:11.5px;">Фамилия</div>
<div class="inp" style="left:251px;top:284px;width:121px;height:20px"><div class="t" style="left:2px;top:2px;font-size:12px;letter-spacing:-0.45px">Землянухин</div></div>
<div class="t" style="left:196px;top:316px;font-size:11.5px;">Имя</div>
<div class="inp" style="left:251px;top:310px;width:121px;height:20px"><div class="t" style="left:2px;top:2px;font-size:12px;letter-spacing:-0.45px">Владимир</div></div>
<div class="t" style="left:196px;top:342px;font-size:11.5px;">Отчество</div>
<div class="inp" style="left:251px;top:336px;width:121px;height:20px"><div class="t" style="left:2px;top:2px;font-size:12px;letter-spacing:-0.45px">Викторович</div></div>
<div class="a" style="left:187px;top:376px;width:187px;height:141px;border:1px solid #a5926a;box-shadow:1px 1px 0 #fff, inset 1px 1px 0 #fff"></div>
<div class="a" style="left:194px;top:370px;width:112px;height:12px;background:#d9cfbb"></div>
<div class="t" style="left:196px;top:369px;font-size:11px;">Параметры пропуска</div>
<div class="t" style="left:203px;top:379px;font-size:11px;">Семейство</div>
<div class="inp" style="left:203px;top:396px;width:55px;height:20px"><div class="t" style="transform:scaleY(1.15);transform-origin:0 78%;left:2px;top:1px;font-size:11px;">112</div></div>
<div class="t" style="left:203px;top:414px;font-size:11px;">Номер</div>
<div class="inp" style="left:203px;top:431px;width:95px;height:19px"><div class="t" style="transform:scaleY(1.15);transform-origin:0 78%;left:2px;top:1px;font-size:11px;">32358</div></div>
<div class="t" style="left:196px;top:450px;font-size:11px;">Действителен</div>
<div class="t" style="left:196px;top:469px;font-size:11px;">с:</div>
<div class="t" style="left:194px;top:493px;font-size:11px;">по:</div>
<div class="inp" style="left:211px;top:466px;width:79px;height:20px"><div class="t" style="transform:scaleY(1.15);transform-origin:0 78%;left:4px;top:1px;font-size:11px;color:#a08a60">22.03.2007</div></div><div class="btn" style="left:277px;top:468px;width:12px;height:17px"><svg width="10" height="14" style="position:absolute;left:0;top:0"><path d="M2 6h6L5 9.5z" fill="#a5926a"/></svg></div><div class="inp" style="left:292px;top:466px;width:55px;height:20px"><div class="t" style="transform:scaleY(1.15);transform-origin:0 78%;left:2px;top:1px;font-size:11px;color:#a08a60">15:26</div></div><div class="btn" style="left:334px;top:468px;width:12px;height:8px"><svg width="10" height="6" style="position:absolute;left:0;top:0"><path d="M2.5 4.5h5L5 2z" fill="#a5926a"/></svg></div><div class="btn" style="left:334px;top:476px;width:12px;height:9px"><svg width="10" height="6" style="position:absolute;left:0;top:0"><path d="M2.5 2h5L5 4.5z" fill="#a5926a"/></svg></div>
<div class="inp" style="left:211px;top:490px;width:79px;height:19px"><div class="t" style="transform:scaleY(1.15);transform-origin:0 78%;left:4px;top:1px;font-size:11px;color:#000">17.04.2007</div></div><div class="btn" style="left:277px;top:492px;width:12px;height:16px"><svg width="10" height="14" style="position:absolute;left:0;top:0"><path d="M2 6h6L5 9.5z" fill="#000"/></svg></div><div class="inp" style="left:292px;top:490px;width:55px;height:19px"><div class="t" style="transform:scaleY(1.15);transform-origin:0 78%;left:2px;top:1px;font-size:11px;color:#000">14:08</div></div><div class="btn" style="left:334px;top:492px;width:12px;height:8px"><svg width="10" height="6" style="position:absolute;left:0;top:0"><path d="M2.5 4.5h5L5 2z" fill="#000"/></svg></div><div class="btn" style="left:334px;top:500px;width:12px;height:8px"><svg width="10" height="6" style="position:absolute;left:0;top:0"><path d="M2.5 2h5L5 4.5z" fill="#000"/></svg></div>
<div class="a" style="left:380px;top:281px;width:212px;height:236px;border:1px solid;border-color:#a5926a transparent transparent #a5926a;box-shadow:inset 1px 1px 0 #000;overflow:hidden"><div class="t" style="left:5px;top:4px;font-size:11px">Паспорт: серия и номер</div><div class="inp" style="left:5px;top:21px;width:184px;height:19px"><div class="t" style="transform:scaleY(1.15);transform-origin:0 78%;left:2px;top:1px;font-size:11px">64 549857</div></div><div class="t" style="left:5px;top:44px;font-size:11px">Причина посещения</div><div class="inp" style="left:5px;top:61px;width:184px;height:19px"><div class="t" style="left:2px;top:1px;font-size:12px;letter-spacing:0">гость</div></div><div class="t" style="left:5px;top:84px;font-size:11px">Когда, кем и где выдан</div><div class="inp" style="left:5px;top:101px;width:184px;height:19px"><div class="t" style="left:2px;top:1px;font-size:12px;letter-spacing:-0.4px">12 о/м г. Санкт-Петербурга</div></div><div class="t" style="left:5px;top:124px;font-size:11px">Адрес</div><div class="inp" style="left:5px;top:141px;width:184px;height:19px"><div class="t" style="left:2px;top:1px;font-size:12px;letter-spacing:-0.43px">г. С-Пб., ул. Есенина 19</div></div><div class="t" style="left:5px;top:164px;font-size:11px">Телефон</div><div class="inp" style="left:5px;top:181px;width:184px;height:19px"><div class="t" style="transform:scaleY(1.15);transform-origin:0 78%;left:2px;top:1px;font-size:11px">1234567</div></div><div class="t" style="left:5px;top:204px;font-size:11px">Марка автомобиля</div><div class="inp" style="left:5px;top:221px;width:184px;height:19px"><div class="t" style="left:2px;top:1px;font-size:11px;letter-spacing:-0.3px">Nissan Primera</div><div class="a" style="left:72px;top:2px;width:1px;height:13px;background:#000"></div></div></div>
<div class="a" style="left:578px;top:283px;width:12px;height:233px;background:#ece6d8"></div>
<div class="btn" style="left:578px;top:283px;width:12px;height:13px"><svg width="10" height="11" style="position:absolute;left:0;top:0"><path d="M2 7h6L5 3.5z" fill="#000"/></svg></div>
<div class="btn" style="left:578px;top:296px;width:12px;height:150px"></div>
<div class="btn" style="left:578px;top:503px;width:12px;height:13px"><svg width="10" height="11" style="position:absolute;left:0;top:0"><path d="M2 4h6L5 7.5z" fill="#000"/></svg></div>
<div class="a" style="left:592px;top:281px;width:4px;height:237px;border-left:2px solid #a08a5c;border-right:2px solid #f4f0e6"></div>
<div class="a" style="left:597px;top:304px;width:197px;height:2px;border-top:1px solid #a5926a;border-bottom:1px solid #fff"></div>
<div class="a" style="left:667px;top:283px;width:2px;height:19px;border-left:1px solid #a5926a;border-right:1px solid #fff"></div>
<div class="a" style="left:597px;top:307px;width:76px;height:20px;background:#e6dfd0;border:1px solid;border-color:#6b5c3c #fff #fff #6b5c3c;box-shadow:inset 1px 1px 0 #1a1408"></div>
<div class="t" style="left:604px;top:310px;font-size:11.5px;">Фотография</div>
<div class="a" style="left:677px;top:308px;width:2px;height:19px;border-left:1px solid #a5926a;border-right:1px solid #fff"></div>
<div class="a" style="left:600px;top:333px;width:143px;height:181px;border:1px solid;border-color:#f3eee3 #a5926a #a5926a #f3eee3"></div>
<div class="a" style="left:187px;top:518px;width:607px;height:29px;border:1px solid #a5926a;box-shadow:1px 1px 0 #fff, inset 1px 1px 0 #fff"></div>
<div class="a" style="left:195px;top:523px;width:110px;height:23px;border:1px solid #000"></div>
<div class="btn" style="left:196px;top:524px;width:108px;height:21px;line-height:18px;font-size:11px">Сохранить</div>
<div class="btn" style="left:321px;top:523px;width:114px;height:23px;line-height:20px;font-size:11px">Отмена</div>
<div class="a" style="left:0;top:552px;width:800px;height:24px;background:#d9cfbb"></div><div class="a" style="left:0;top:553px;width:800px;height:1px;background:#f6f2ea"></div>
<div class="t" style="left:3px;top:557px;font-size:12px;font-weight:bold">Пользователь:</div>
<div class="a" style="left:111px;top:555px;width:239px;height:17px;border:1px solid;border-color:#a5926a #fff #fff #a5926a"></div>
<div class="t" style="left:120px;top:557px;font-size:12px;font-weight:bold">()</div>
<svg class="a" style="left:330px;top:556px" width="17" height="16" viewBox="0 0 17 16"><path d="M8.500 0l1.500 2.500 3-1.500-.5 3 3 .5-2 2.500 2 2.500-3 .5.500 3-3-1-1.500 2.500-1.500-2.500-3 1 .5-3-3-.5 2-2.500-2-2.500 3-.5-.5-3 3 1.500z" fill="#f8f000"/><path d="M8.500 3a3.200 3.200 0 0 0-1.800 5.800V11h3.600V8.800A3.200 3.200 0 0 0 8.500 3z" fill="#fffce8" stroke="#000" stroke-width="1"/><path d="M8.500 6v4" stroke="#888" stroke-width=".8"/><rect x="7" y="11" width="3" height="3.500" fill="#000"/></svg>
<div class="t" style="left:355px;top:557px;font-size:11.6px;font-weight:bold">Статус:</div>
<div class="a" style="left:412px;top:555px;width:388px;height:17px;border:1px solid;border-color:#a5926a #fff #fff #a5926a"></div>
<!-- photoicons -->
<svg class="a" style="left:599px;top:283px" width="18" height="18"><circle cx="6" cy="6" r="5" fill="#2858c8"/><path d="M3 4q2-3 5-1l-1 3-3 1zM6 8l3-1 1 3-3 1z" fill="#38b048"/><path d="M2 9h6l1 1.500h5V16H2z" fill="#f0e868" stroke="#222" stroke-width="1"/><path d="M2 16l3-4.500h12L14 16z" fill="#a8a030" stroke="#222" stroke-width="1"/><path d="M12 4q3 0 3 3M15 7l-2-.5M15 7l1-2" stroke="#222" fill="none"/></svg>
<svg class="a" style="left:621px;top:283px" width="18" height="18"><rect x="1.500" y="3.500" width="12" height="12" rx="1" fill="#8c8438" stroke="#222"/><rect x="5" y="1.500" width="5" height="3.500" fill="#d8d0a0" stroke="#222"/><path d="M3 6h9v8H3z" fill="#a8a058"/><rect x="7.500" y="8.500" width="9" height="8" fill="#f4f4ff" stroke="#3848c0" stroke-width="1.400"/><path d="M9.500 11h5M9.500 13.500h5" stroke="#3848c0" stroke-width="1.200"/></svg>
<svg class="a" style="left:643px;top:283px" width="18" height="18"><path d="M5.500 2.500h7l3 3v10h-10z" fill="#fff" stroke="#222"/><path d="M12.500 2.500v3h3" fill="#ddd" stroke="#222"/><rect x="8" y="8" width="6" height="3" fill="#f0e868"/><path d="M1.500 3.500l7 8M8.500 3.500l-7 8" stroke="#c01818" stroke-width="1.600"/></svg>
<svg class="a" style="left:675px;top:283px" width="18" height="18"><path d="M4 2h13M4 4h13" stroke="#2838b0" stroke-width="1"/><path d="M2.500 3v12M1 5l1.500-2.500L4 5M1 13l1.500 2.500L4 13" stroke="#2838b0" fill="none" stroke-width="1"/><rect x="5.500" y="5.500" width="11" height="11" fill="#f0e868" stroke="#222"/><path d="M6 16l4-5 2 2 2-3 2.500 3v3z" fill="#444"/><path d="M7 16l3-3 2 2 2-2 2 3z" fill="#aaa"/><circle cx="13.500" cy="8" r="1.200" fill="#444"/></svg>
<!-- end -->
</body></html>
